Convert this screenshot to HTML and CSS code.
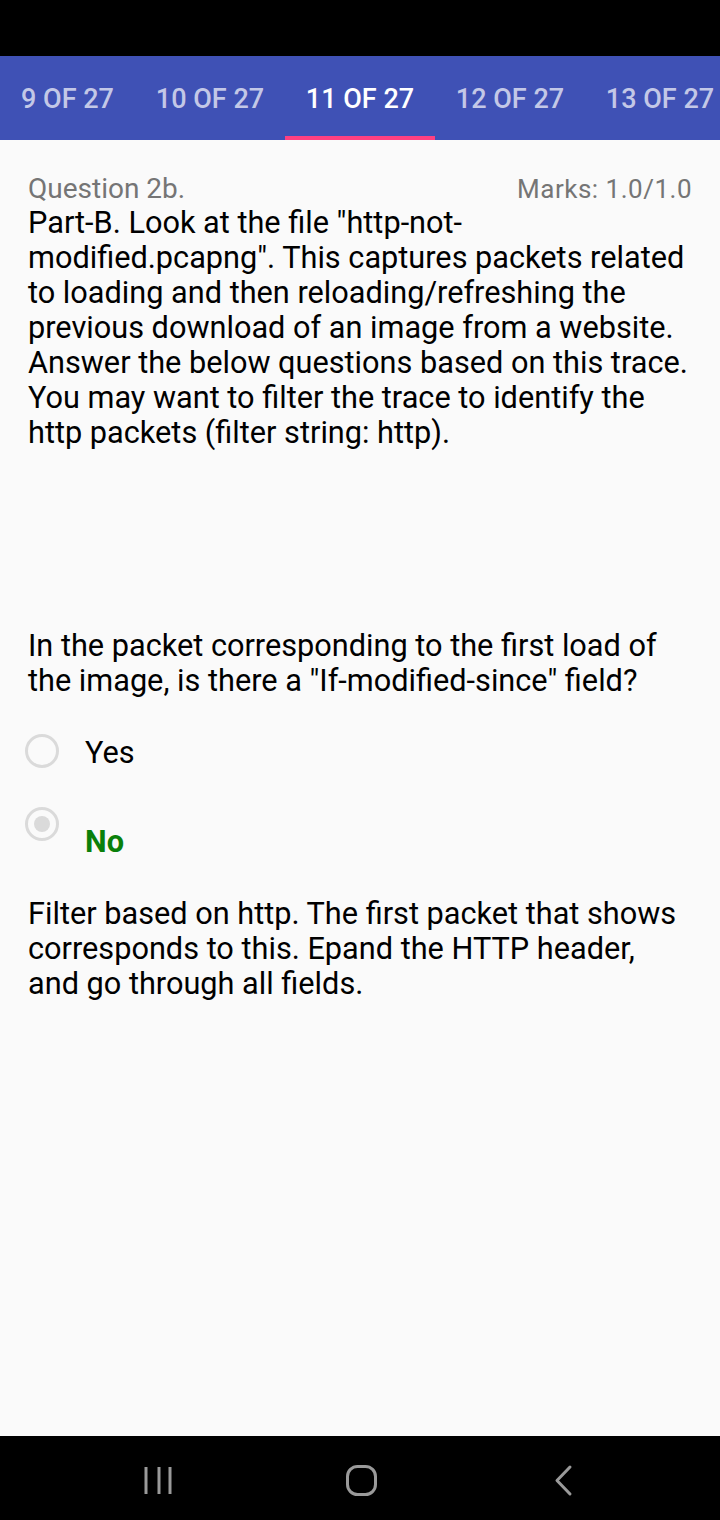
FILE: index.html
```html
<!DOCTYPE html>
<html>
<head>
<meta charset="utf-8">
<link rel="stylesheet" href="styles.css">
</head>
<body>
<div class="screen">
  <div class="status"></div>
  <nav class="tabs">
    <div class="tab tab-first">9 OF 27</div>
    <div class="tab">10 OF 27</div>
    <div class="tab active">11 OF 27</div>
    <div class="tab">12 OF 27</div>
    <div class="tab">13 OF 27</div>
  </nav>
  <main class="content">
    <div class="q-head">
      <span class="q-num">Question 2b.</span>
      <span class="q-marks">Marks: 1.0/1.0</span>
    </div>
    <p class="q-intro">Part-B. Look at the file "http-not-modified.pcapng". This captures packets related to loading and then reloading/refreshing the previous download of an image from a website. Answer the below questions based on this trace. You may want to filter the trace to identify the http packets (filter string: http).</p>
    <p class="q-text">In the packet corresponding to the first load of the image, is there a "If-modified-since" field?</p>
    <div class="option">
      <span class="radio"></span>
      <span class="opt-label">Yes</span>
    </div>
    <div class="option option-checked">
      <span class="radio"><span class="radio-dot"></span></span>
      <span class="opt-label correct">No</span>
    </div>
    <p class="feedback">Filter based on http. The first packet that shows corresponds to this. Epand the HTTP header, and go through all fields.</p>
  </main>
  <div class="navbar">
    <svg class="nav-icon" width="40" height="40" viewBox="0 0 40 40">
      <path d="M7 6v27M20 6v27M31 6v27" stroke="#9a9a9a" stroke-width="3" fill="none"/>
    </svg>
    <svg class="nav-icon" width="40" height="40" viewBox="0 0 40 40">
      <rect x="6.5" y="5.5" width="28" height="28" rx="10" stroke="#9a9a9a" stroke-width="3" fill="none"/>
    </svg>
    <svg class="nav-icon" width="40" height="40" viewBox="0 0 40 40">
      <path d="M27 6L14 19.5 27 33" stroke="#9a9a9a" stroke-width="3" fill="none" stroke-linecap="round" stroke-linejoin="round"/>
    </svg>
  </div>
</div>
</body>
</html>
```
FILE: styles.css
```css
* { box-sizing: border-box; }
html, body { margin: 0; padding: 0; }
body {
  width: 720px;
  height: 1520px;
  font-family: Roboto, "Noto Sans", sans-serif;
  background: #fafafa;
  overflow: hidden;
}
.screen {
  display: flex;
  flex-direction: column;
  height: 1520px;
}
.status {
  height: 56px;
  background: #000;
  flex: none;
}
.tabs {
  height: 84px;
  flex: none;
  background: #3f51b5;
  display: flex;
  overflow: hidden;
  white-space: nowrap;
}
.tab {
  flex: none;
  width: 150px;
  display: flex;
  align-items: center;
  justify-content: center;
  font-size: 27px;
  font-weight: 500;
  color: rgba(255, 255, 255, 0.7);
  border-bottom: 4px solid transparent;
  padding-top: 6px;
}
.tab-first { width: 135px; }
.tab.active {
  color: #fff;
  border-bottom-color: #ff4081;
}
.content {
  flex: 1;
  padding: 33px 28px 0 28px;
  color: #000;
}
.q-head {
  display: flex;
  justify-content: space-between;
  align-items: baseline;
  line-height: 32px;
  color: #757575;
}
.q-num { font-size: 28px; }
.q-marks {
  font-size: 26px;
  letter-spacing: 0.5px;
  padding-right: 0;
}
.q-intro {
  margin: 0;
  font-size: 30.7px;
  line-height: 35px;
}
.q-text {
  margin: 178px 0 0 0;
  font-size: 30.7px;
  line-height: 35px;
}
.option {
  display: flex;
  align-items: flex-start;
  margin-top: 36px;
  margin-left: -3px;
}
.option-checked { margin-top: 35px; }
.radio {
  flex: none;
  width: 34px;
  height: 34px;
  border: 3px solid #dadada;
  border-radius: 50%;
  display: flex;
  align-items: center;
  justify-content: center;
}
.radio-dot {
  width: 16px;
  height: 16px;
  border-radius: 50%;
  background: #dadada;
}
.opt-label {
  margin-left: 26px;
  font-size: 30.7px;
  line-height: 38px;
}
.opt-label.correct {
  color: #0a800a;
  font-weight: 700;
  margin-top: 16px;
}
.feedback {
  margin: 35px 0 0 0;
  font-size: 30.7px;
  line-height: 35px;
}
.navbar {
  height: 84px;
  flex: none;
  background: #000;
  display: flex;
  justify-content: center;
  align-items: center;
  gap: 162px;
  padding-top: 6px;
  padding-left: 2px;
}
.nav-icon { display: block; }
```
